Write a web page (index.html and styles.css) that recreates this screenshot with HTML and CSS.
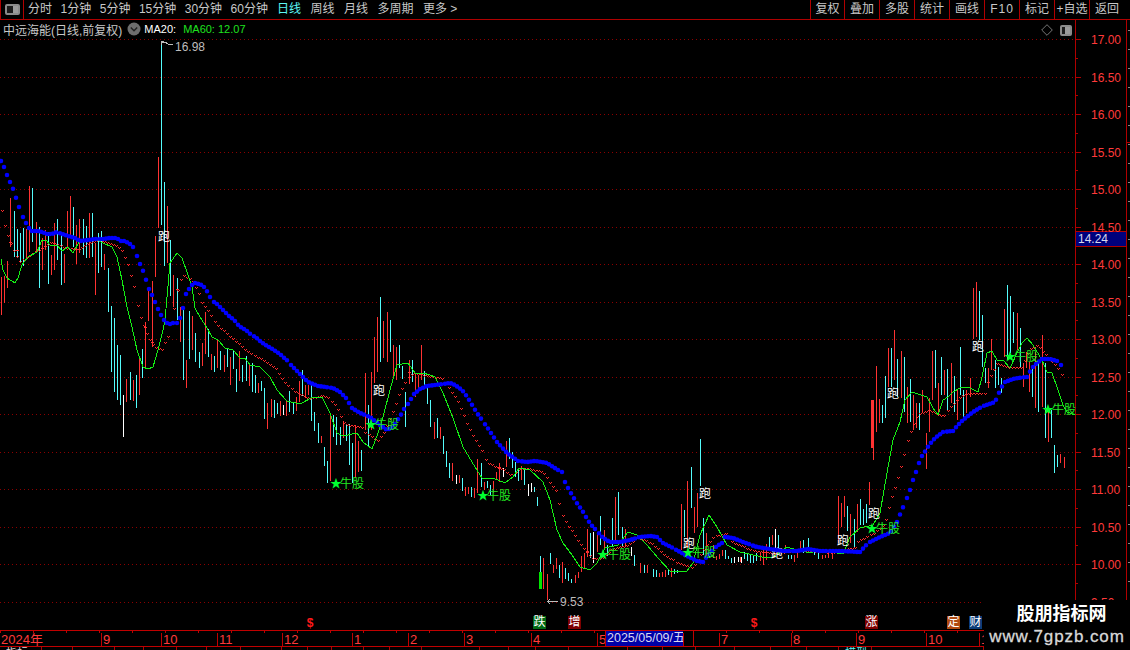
FILE: index.html
```html
<!DOCTYPE html>
<html lang="zh-CN">
<head>
<meta charset="utf-8">
<title>中远海能</title>
<link rel="stylesheet" href="styles.css">
</head>
<body>
<div class="app">
  <header class="topbar">
    <div class="layout-cell"><span class="layout-icon"><span class="layout-half"></span></span></div>
    <nav class="periods">
      <a>分时</a><a>1分钟</a><a>5分钟</a><a>15分钟</a><a>30分钟</a><a>60分钟</a>
    </nav>
    <nav class="periods periods-long">
      <a class="active">日线</a><a>周线</a><a>月线</a><a>多周期</a><a>更多 &gt;</a>
    </nav>
    <div class="tools">
      <a class="tool">复权</a><a class="tool">叠加</a><a class="tool">多股</a><a class="tool">统计</a><a class="tool">画线</a><a class="tool spaced">F10</a><a class="tool">标记</a><a class="tool">+自选</a><a class="tool tool-last">返回</a>
    </div>
  </header>

  <main class="chart" id="chart">
    <svg class="plot" id="plot" width="1130" height="610" viewBox="0 20 1130 610"></svg>
    <div class="legend">
      <span>中远海能(日线,前复权)</span>
      <span class="legend-toggle"><svg width="14" height="14" viewBox="0 0 14 14"><circle cx="7" cy="7" r="6.5" fill="#6e6e6e"/><path d="M3.8 5.6 7 8.8l3.2-3.2" fill="none" stroke="#222" stroke-width="1.4"/></svg></span>
      <span class="ma20">MA20:</span>
      <span class="ma60">MA60: 12.07</span>
    </div>
    <div class="chart-icons">
      <svg width="12" height="12" viewBox="0 0 12 12"><path d="M6 .7 11.3 6 6 11.3.7 6z" fill="none" stroke="#777"/></svg>
      <span class="layout-icon layout-small"><span class="layout-half"></span></span>
    </div>
    <div class="last-price">14.24</div>
  </main>

  <div class="datebar" id="datebar"></div>
  <div class="tabs" id="tabs"></div>

  <aside class="watermark">
    <div class="wm-title">股朋指标网</div>
    <div class="wm-url">www.7gpzb.com</div>
  </aside>
</div>
<script src="script.js"></script>
</body>
</html>
```
FILE: styles.css
```css
* { box-sizing: border-box; }
html, body { margin: 0; padding: 0; background: #000; }
body {
  width: 1130px;
  height: 650px;
  overflow: hidden;
  font-family: "Liberation Sans", "Noto Sans CJK SC", sans-serif;
  font-size: 12px;
  color: #c8c8c8;
}
.app {
  position: relative;
  display: flex;
  flex-direction: column;
  width: 1130px;
  height: 650px;
}
.topbar {
  display: flex;
  align-items: stretch;
  flex: 0 0 20px;
  height: 20px;
  border-bottom: 1px solid #b00000;
  line-height: 19px;
}
.layout-cell {
  display: flex;
  align-items: center;
  justify-content: center;
  width: 24px;
  border-left: 1px solid #b00000;
  border-right: 1px solid #b00000;
}
.layout-icon {
  display: flex;
  justify-content: flex-end;
  width: 15px;
  height: 11px;
  border: 2px solid #8a8a8a;
  border-radius: 2px;
  background: #1c1c1c;
}
.layout-half { width: 5px; background: #9a9a9a; }
.layout-small { width: 12px; height: 11px; }
.periods { display: flex; gap: 8.5px; margin-left: 4px; }
.periods-long { gap: 9.5px; margin-left: 9px; }
.periods a.active { color: #5cf6f6; }
.tools { display: flex; margin-left: auto; }
.tool {
  width: 35px;
  text-align: center;
  border-left: 1px solid #b00000;
  white-space: nowrap;
}
.tool:first-child { width: 34px; }
.tool-last { width: 41px; padding-right: 6px; }
.spaced { letter-spacing: 1px; }

.chart {
  position: relative;
  flex: 0 0 610px;
  height: 610px;
  overflow: hidden;
}
.plot { position: absolute; left: 0; top: 0; display: block; }
.legend {
  position: absolute;
  left: 3px;
  top: 1px;
  display: flex;
  align-items: center;
  height: 16px;
}
.legend-toggle { display: flex; margin: 0 3px 0 5px; }
.ma20 { color: #fff; font-size: 11px; }
.ma60 { color: #1fe01f; margin-left: 7px; font-size: 11px; }
.chart-icons {
  position: absolute;
  left: 1041px;
  top: 4px;
  display: flex;
  align-items: center;
  gap: 7px;
}
.last-price {
  position: absolute;
  left: 1075px;
  top: 211px;
  width: 52px;
  height: 16px;
  padding-left: 2px;
  border: 1px solid #b00000;
  background: #00007c;
  color: #d8d8ee;
  line-height: 14px;
}
.tag {
  position: absolute;
  white-space: nowrap;
  font-size: 12px;
  line-height: 14px;
}
.tag-run { color: #fff; }
.tag-bull { color: #22e622; }
.tag-star { position: absolute; color: #00ff30; font-size: 12px; line-height: 14px; }
.axis-label { position: absolute; left: 1091px; color: #ff3a3a; line-height: 14px; }
.extreme { position: absolute; color: #bdbdbd; line-height: 14px; }
.badge {
  position: absolute;
  top: 596px;
  width: 13px;
  height: 13px;
  color: #fff;
  font-size: 12px;
  line-height: 13px;
  text-align: center;
}
.badge-fall { background: #006a14; }
.badge-up { background: #7d0000; }
.badge-due { background: #b04a10; }
.badge-fin { background: #0c3c78; }
.dollar {
  position: absolute;
  top: 597px;
  width: 10px;
  color: #ff1a1a;
  font-weight: bold;
  font-size: 12px;
  line-height: 13px;
  text-align: center;
}
.datebar {
  display: flex;
  flex: 0 0 17px;
  height: 17px;
  width: 984px;
  border-top: 1px solid #c00000;
  border-bottom: 1px solid #c00000;
  background-image: repeating-linear-gradient(90deg, #c00000 0 1px, transparent 1px 33px);
}
.date-cell {
  flex: none;
  overflow: hidden;
  margin-top: 2px;
  height: 13px;
  padding-left: 1px;
  border-left: 1px solid #c00000;
  color: #ff3a3a;
  background: #000;
  font-size: 13px;
  line-height: 13px;
  white-space: nowrap;
}
.date-cell.first { border-left: 0; }
.date-cell.blank { background: none; }
.date-cell.selected {
  margin-top: 0;
  height: 15px;
  line-height: 15px;
  padding-left: 1px;
  background: #0000a8;
  color: #d8d8ee;
  font-size: 12.5px;
}
.tabs {
  display: flex;
  flex: 0 0 3px;
  height: 3px;
  overflow: hidden;
}
.tab {
  flex: none;
  height: 3px;
  border-right: 1px solid #b00000;
  overflow: hidden;
  padding-left: 6px;
  font-size: 11px;
  line-height: 13px;
  white-space: nowrap;
  color: #ddd;
}
.tab-cyan { color: #5cf6f6; }
.watermark {
  position: absolute;
  left: 984px;
  top: 600px;
  width: 146px;
  height: 50px;
  background: #000;
  text-align: center;
}
.wm-title {
  margin: 2px 0 0 9px;
  color: #fff;
  font-size: 18px;
  font-weight: bold;
  line-height: 24px;
  white-space: nowrap;
}
.wm-url {
  color: #d8d8d8;
  font-size: 17px;
  letter-spacing: .9px;
  line-height: 21px;
  white-space: nowrap;
  -webkit-text-stroke: .3px #d8d8d8;
}
.plot-run { fill: #fff; font-size: 12px; }
```
FILE: script.js
```js
(function () {
  var OFFSET = 20; // chart box starts below the top bar
  var chart = document.getElementById('chart');
  var plot = document.getElementById('plot');
  var NS = 'http://www.w3.org/2000/svg';

  function svg(tag, attrs) {
    var el = document.createElementNS(NS, tag);
    for (var k in attrs) el.setAttribute(k, attrs[k]);
    plot.appendChild(el);
    return el;
  }
  function label(cls, text, x, y) {
    var el = document.createElement('div');
    el.className = cls;
    el.textContent = text;
    el.style.left = x + 'px';
    el.style.top = (y - OFFSET) + 'px';
    chart.appendChild(el);
    return el;
  }
  function priceY(p) { return Math.floor(39.5 + (17 - p) * 75); }

  // grid + axis
  var grid = '', ticks = '', p;
  for (p = 17; p >= 9.5; p -= 0.5) {
    var y = priceY(p) + 0.5;
    grid += 'M0 ' + y + 'H1075';
    ticks += 'M1075 ' + y + 'H1081';
    if (p > 9.5) ticks += 'M1075 ' + (priceY(p - 0.25) + 0.5) + 'H1078';
    label('axis-label', p.toFixed(2), 1091, priceY(p) - 6);
  }
  svg('path', { d: grid, stroke: '#8c0000', 'stroke-width': 1, 'stroke-dasharray': '1 3', 'shape-rendering': 'crispEdges' });
  svg('path', { d: ticks + 'M1075.5 20V630M1126.5 20V630M1126 142.5H1130', stroke: '#b00000', 'shape-rendering': 'crispEdges' });
  var strip = '';
  for (y = 30; y < 600; y += 19) strip += 'M1128 ' + (y + 0.5) + 'H1130';
  svg('path', { d: strip, stroke: '#888', 'shape-rendering': 'crispEdges' });

  // bars: x,top,bottom per colour
  var BARS = {
    r: '1,277,315 4,276,303 7,261,288 10,198,247 26,229,257 29,186,252 36,222,252 42,238,270 45,230,250 51,255,275 54,223,270 64,254,283 67,211,247 70,196,238 76,225,264 79,219,253 89,213,258 95,243,295 104,254,270 126,379,402 133,380,401 139,358,395 145,322,367 148,288,321 152,281,347 155,236,277 158,157,228 167,206,263 173,275,307 180,307,342 186,360,388 192,316,350 202,343,366 205,312,354 211,354,370 217,340,368 224,355,372 230,357,385 239,351,381 249,363,386 258,383,393 267,403,429 271,399,417 280,401,416 286,401,416 296,397,411 299,381,402 305,385,398 308,385,395 321,436,443 330,415,481 343,421,438 355,425,478 358,441,472 365,373,430 371,372,430 374,337,383 377,317,372 383,321,358 387,312,362 393,345,376 396,347,380 409,360,384 415,373,397 418,375,392 421,345,380 434,422,439 440,427,439 452,463,481 459,475,483 465,487,496 468,487,494 474,488,498 477,459,493 484,482,490 493,481,493 496,472,480 499,463,482 506,441,467 521,466,480 543,558,589 547,574,600 553,565,573 556,558,569 562,562,583 575,575,583 578,572,578 581,556,572 584,553,569 587,529,557 597,533,552 604,530,550 615,497,543 625,529,547 640,563,573 647,565,573 659,573,577 662,572,577 665,570,577 671,568,577 681,504,550 687,481,548 694,507,533 697,493,527 706,533,556 713,545,558 716,556,560 719,554,559 722,550,556 740,557,562 760,553,561 763,547,565 766,544,560 772,535,545 785,545,553 794,555,562 797,550,558 800,541,550 811,550,553 822,555,559 825,555,558 828,553,558 832,553,559 838,496,543 841,503,527 844,496,517 850,514,543 857,504,532 869,482,505 873,400,460 876,366,432 879,399,423 888,348,387 894,330,380 901,351,398 907,387,423 913,395,430 916,403,428 922,390,413 926,433,469 929,398,432 932,351,400 938,383,412 944,370,395 951,363,403 957,390,420 966,390,413 970,378,397 973,288,339 976,282,337 988,368,388 991,339,370 1004,309,357 1017,313,350 1023,363,387 1026,352,368 1029,362,392 1035,352,408 1042,335,407 1048,408,442 1060,454,463 1064,457,468',
    c: '14,211,257 17,229,257 20,233,262 23,228,266 32,188,242 39,227,288 48,232,284 57,219,260 61,235,285 73,207,247 83,219,255 86,226,258 92,213,257 98,233,273 101,231,267 108,268,312 111,306,372 114,318,392 117,345,400 120,355,405 130,372,400 136,375,408 142,349,378 161,42,225 164,182,266 170,240,296 177,278,320 183,307,380 189,311,359 195,333,362 199,352,368 208,329,357 214,356,372 220,351,370 227,348,367 233,350,369 236,369,392 242,365,382 246,356,381 252,363,392 255,375,393 261,381,391 264,388,419 274,400,418 277,403,414 289,391,412 293,402,414 302,370,396 311,385,421 314,412,431 318,423,443 324,447,466 327,461,483 333,415,437 336,417,445 340,427,445 346,424,441 349,424,465 352,443,483 361,450,471 368,405,447 380,297,362 390,320,352 399,345,368 402,366,379 405,392,427 412,360,382 424,371,388 427,387,404 430,400,427 437,418,438 443,436,454 446,451,467 449,463,478 462,478,491 471,487,497 481,463,487 487,481,488 490,485,495 509,438,459 512,452,468 515,462,477 518,468,481 524,469,485 534,487,492 537,497,506 540,556,572 550,553,564 559,565,578 565,568,579 568,573,581 571,579,583 590,533,558 600,516,545 607,545,556 612,518,547 618,492,535 622,527,547 634,555,566 644,565,573 653,569,577 656,570,577 668,570,575 674,569,574 677,570,573 684,510,537 691,467,508 700,439,486 703,518,555 709,553,558 725,550,559 728,556,559 731,558,563 744,552,559 747,553,561 750,555,563 753,556,563 756,553,561 769,537,548 778,535,549 788,555,559 791,555,559 803,540,553 808,538,551 814,552,555 818,553,559 847,506,531 854,519,547 860,499,525 863,509,525 866,504,523 882,405,423 885,376,418 891,348,387 897,359,397 904,357,412 910,379,422 919,403,430 935,350,388 941,357,395 947,369,410 954,376,412 960,347,395 963,390,417 979,291,340 982,315,367 985,368,383 995,360,388 998,367,385 1001,378,393 1007,285,360 1010,296,353 1013,312,343 1020,328,367 1032,365,397 1038,362,412 1045,363,438 1051,410,438 1054,445,473 1057,455,467',
    w: '123,395,437 283,405,415 456,475,484 503,468,477 528,484,496 531,483,492 593,532,563 631,547,556 734,557,563 738,557,562 741,557,563 775,529,548'
  };
  var COLORS = { r: '#ff3232', c: '#54fcfc', w: '#ffffff' };
  Object.keys(BARS).forEach(function (c) {
    var d = BARS[c].split(' ').map(function (b) {
      var v = b.split(',');
      return 'M' + (+v[0] + 0.5) + ' ' + v[1] + 'V' + v[2];
    }).join('');
    svg('path', { d: d, stroke: COLORS[c], 'shape-rendering': 'crispEdges', fill: 'none' });
  });
  // thick candle bodies and doji marks
  svg('rect', { x: 871, y: 400, width: 3, height: 48, fill: '#ff3232' });
  svg('rect', { x: 539, y: 572, width: 3, height: 17, fill: '#00e600' });
  var doji = '9,242 16,250 144,327 151,342 176,289 408,372 498,467 586,552';
  svg('path', {
    d: doji.split(' ').map(function (s) { var v = s.split(','); return 'M' + v[0] + ' ' + (+v[1] + 0.5) + 'h3'; }).join(''),
    stroke: '#ff3232', 'shape-rendering': 'crispEdges'
  });

  function parse(s) { return s.trim().split(/\s+/).map(function (t) { var v = t.split(','); return [+v[0], +v[1]]; }); }
  function interp(pts, x) {
    if (x < pts[0][0]) return null;
    for (var i = 1; i < pts.length; i++) {
      if (x <= pts[i][0]) {
        var a = pts[i - 1], b = pts[i];
        return a[1] + (b[1] - a[1]) * (x - a[0]) / (b[0] - a[0]);
      }
    }
    return null;
  }

  // MA chevrons
  var RED = parse('2,210 4,221 7,233 14,250 20,261 27,257 33,253 42,248 50,242 60,245 68,248 80,249 87,243 97,240 112,243 120,247 123,252 127,261 130,271 133,282 136,294 139,310 142,320 148,336 155,347 162,349 164,343 167,339 170,329 173,312 180,281 183,275 192,279 199,293 202,302 208,310 214,320 220,327 227,333 233,338 242,346 249,352 261,358 270,364 277,369 283,380 290,387 297,392 310,398 323,395 330,398 337,407 343,421 347,424 362,427 365,432 372,436 377,441 383,434 393,411 399,394 406,380 413,373 430,376 443,378 450,389 457,399 463,412 468,426 475,438 482,450 488,463 502,468 512,475 520,468 530,468 543,472 557,491 559,503 562,513 565,519 568,525 572,530 578,540 584,548 593,558 602,558 613,548 627,545 638,537 652,543 663,553 677,562 693,567 707,544 714,536 727,533 733,542 753,550 773,553 800,550 833,552 855,547 857,542 863,538 875,532 885,523 888,511 892,496 895,487 898,477 901,466 904,454 907,443 910,433 913,426 918,413 930,410 943,416 952,405 962,395 970,393 987,393 988,382 992,373 997,363 1010,367 1022,367 1030,348 1038,345 1045,353 1057,366 1064,377');
  var chev = '', i, x, v;
  for (i = 0; i < 346; i++) {
    x = Math.round(2 + i * 3.08);
    v = interp(RED, x);
    if (v === null) continue;
    v = Math.round(v);
    chev += 'M' + (x - 1) + ' ' + v + 'h1v1h-1zM' + (x + 1) + ' ' + v + 'h1v1h-1zM' + x + ' ' + (v + 1) + 'h1v1h-1z';
  }
  svg('path', { d: chev, fill: '#ff2a2a', 'shape-rendering': 'crispEdges' });

  // green MA
  var GREEN = '1,259 3,270 7,278 15,283 18,278 22,265 28,257 37,252 42,240 47,241 50,245 57,245 62,251 68,247 73,253 80,240 93,238 103,243 112,247 117,257 122,280 127,307 132,327 137,350 143,367 148,369 153,367 158,350 163,330 165,320 170,263 177,253 182,258 187,272 192,287 195,308 200,317 207,328 212,337 218,340 225,348 233,350 240,358 245,358 250,365 260,367 270,377 277,390 287,401 300,404 313,397 322,397 330,413 337,433 343,436 357,433 363,442 372,449 378,433 383,417 390,390 397,365 408,363 415,373 423,373 430,375 435,377 443,393 453,418 463,447 475,467 482,478 493,478 505,483 513,477 519,468 530,470 543,482 550,500 557,530 563,543 572,555 580,567 590,570 597,563 605,548 618,545 628,532 637,535 647,545 658,558 670,571 687,571 693,563 700,535 709,515 717,527 727,545 740,552 753,555 767,558 773,557 787,547 797,550 810,553 820,550 843,554 850,537 860,528 873,525 880,513 887,473 893,440 900,422 905,400 912,392 918,394 927,397 933,408 938,415 943,400 948,397 953,392 962,387 970,388 978,392 982,377 987,353 992,351 997,360 1003,360 1010,368 1017,353 1022,343 1027,338 1033,345 1042,360 1047,372 1052,373 1057,387 1063,405 1067,412 1075,415';
  svg('polyline', { points: GREEN, fill: 'none', stroke: '#14f014', 'stroke-width': 1, 'shape-rendering': 'crispEdges' });

  // this signal sits under the blue dots in the chart's paint order
  var under = svg('text', { x: 771, y: 558, 'class': 'plot-run' });
  under.textContent = '跑';

  // blue MA dots
  var BLUE = parse('1,161 4,167 7,175 10,182 14,191 17,201 20,210 23,217 26,223 29,228 32,231 38,231 42,232 47,234 52,234 57,232 62,234 68,236 75,238 80,241 88,240 95,239 103,239 110,238 117,238 120,241 125,241 130,244 133,247 136,253 139,262 142,268 145,276 148,287 152,295 155,302 158,309 161,315 164,320 167,323 170,324 173,323 177,323 180,318 183,308 186,294 189,289 192,285 195,283 199,284 202,285 205,288 208,293 211,299 214,302 217,304 220,307 224,311 227,314 230,317 233,319 236,322 239,326 242,328 246,330 249,333 252,335 255,337 258,339 261,342 264,344 267,346 271,348 274,350 277,352 280,354 283,357 286,359 289,363 293,367 298,372 302,376 308,382 318,386 333,388 340,392 346,398 352,408 360,413 370,417 375,421 380,425 387,430 393,427 402,413 405,407 409,403 413,395 420,389 427,386 435,385 443,384 450,383 455,385 462,390 468,398 477,413 487,427 497,442 507,453 518,461 527,462 535,461 547,463 558,470 562,472 564,480 568,488 572,495 575,500 578,505 582,510 585,515 587,519 593,527 598,532 603,538 610,542 620,542 630,540 640,537 650,536 657,537 663,543 673,548 687,556 697,561 703,562 708,555 717,546 722,543 725,537 733,538 743,542 757,547 770,549 783,551 797,551 808,549 820,551 840,551 860,552 868,543 880,537 890,533 897,522 901,512 904,505 907,498 910,490 913,480 916,472 919,463 922,456 926,450 929,445 935,438 943,432 953,431 957,426 963,420 973,412 983,406 995,402 998,395 1001,388 1005,382 1013,379 1018,378 1027,377 1032,368 1036,364 1042,359 1050,359 1057,361 1063,367');
  var dots = '';
  for (i = 0; i < 346; i++) {
    x = Math.round(1 + i * 3.08);
    v = interp(BLUE, x);
    if (v === null) continue;
    dots += 'M' + (x - 2.3) + ' ' + v.toFixed(1) + 'a2.3 2.3 0 1 0 4.6 0a2.3 2.3 0 1 0-4.6 0z';
  }
  svg('path', { d: dots, fill: '#0000ff' });

  // extreme price markers
  svg('path', { d: 'M161.5 45V41.5H164M162 43l3-1 3 2 5 0M547 601.5H558M547 601.5l3-2M547 601.5l3 2', fill: 'none', stroke: '#bdbdbd', 'shape-rendering': 'crispEdges' });
  label('extreme', '16.98', 175, 40);
  label('extreme', '9.53', 560, 595);

  // signal tags
  [[164, 237], [379, 391], [705, 494], [689, 544], [843, 541], [874, 514], [893, 394], [978, 347]].forEach(function (t) {
    label('tag tag-run', '跑', t[0] - 6, t[1] - 7);
  });
  [[335, 484], [370, 425], [482, 496], [602, 555], [687, 553], [871, 529], [1009, 357], [1047, 410]].forEach(function (t) {
    label('tag-star', '★', t[0] - 5, t[1] - 7);
    label('tag tag-bull', '牛股', t[0] + 5, t[1] - 7);
  });

  // event badges above the date bar
  [['跌', 533, 'fall'], ['增', 568, 'up'], ['涨', 865, 'up'], ['定', 947, 'due'], ['财', 969, 'fin']].forEach(function (b) {
    var el = document.createElement('div');
    el.className = 'badge badge-' + b[2];
    el.textContent = b[0];
    el.style.left = b[1] + 'px';
    chart.appendChild(el);
  });
  [305, 749].forEach(function (x) {
    var el = document.createElement('div');
    el.className = 'dollar';
    el.textContent = '$';
    el.style.left = x + 'px';
    chart.appendChild(el);
  });

  // date bar
  var bar = document.getElementById('datebar');
  [['2024年', 0, 101, 'first'], ['9', 101, 161], ['10', 161, 217], ['11', 217, 282], ['12', 282, 352], ['1', 352, 408], ['2', 408, 464], ['3', 464, 531], ['4', 531, 597], ['5', 597, 605], ['2025/05/09/五', 605, 683, 'selected'], ['', 683, 719, 'blank'], ['7', 719, 791], ['8', 791, 856], ['9', 856, 926], ['10', 926, 979], ['1', 979, 984]].forEach(function (c) {
    var el = document.createElement('div');
    el.className = 'date-cell' + (c[3] ? ' ' + c[3] : '');
    el.textContent = c[0];
    el.style.width = (c[2] - c[1]) + 'px';
    bar.appendChild(el);
  });

  // clipped tab row
  var tabs = document.getElementById('tabs');
  var stops = [42, 73, 115, 144, 177, 207, 241, 282, 308, 332, 364, 390, 422, 480, 509, 536, 569, 628, 663, 696, 735, 771, 807, 839, 872, 984];
  var prev = 0;
  stops.forEach(function (s, n) {
    var el = document.createElement('div');
    el.className = 'tab' + (n === 24 ? ' tab-cyan' : '');
    el.style.width = (s - prev) + 'px';
    if (n === 0) el.textContent = '指标';
    if (n === 24) el.textContent = '模型';
    tabs.appendChild(el);
    prev = s;
  });
})();
```
